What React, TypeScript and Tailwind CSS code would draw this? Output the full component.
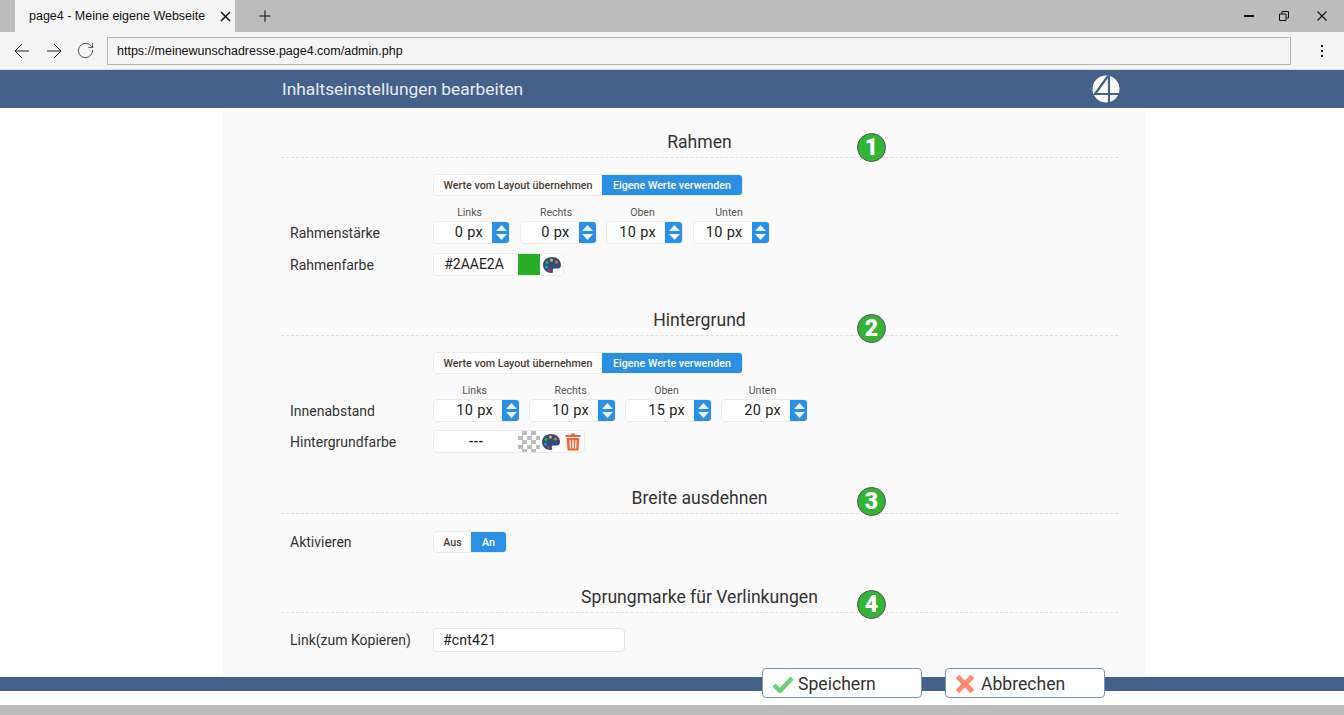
import { RotateCw, Plus } from 'lucide-react';

const rahmen = [
  { label: 'Links', value: '0' },
  { label: 'Rechts', value: '0' },
  { label: 'Oben', value: '10' },
  { label: 'Unten', value: '10' },
];

const abstand = [
  { label: 'Links', value: '10' },
  { label: 'Rechts', value: '10' },
  { label: 'Oben', value: '15' },
  { label: 'Unten', value: '20' },
];

function Logo() {
  return (
    <svg width="28" height="28" viewBox="0 0 28 28">
      <circle cx="14" cy="14" r="13.5" fill="#ffffff" />
      <path d="M16 1 L3 19 L28 19 M17 1 L17 28" fill="none" stroke="#44618a" strokeWidth="2.2" />
    </svg>
  );
}

function Palette() {
  return (
    <svg width="20" height="18" viewBox="0 0 20 18">
      <path d="M10 1 C4.5 1 1 4.6 1 9 C1 13.5 4.8 17 9.5 17 C11 17 11.5 16 11 15 C10.3 13.6 11 12.4 12.6 12.4 L16 12.4 C18 12.4 19 11 19 9 C19 4.5 15.3 1 10 1 Z" fill="#2f4f7a" />
      <circle cx="5" cy="6.5" r="1.6" fill="#2fae4a" />
      <circle cx="9.5" cy="4" r="1.6" fill="#f0b429" />
      <circle cx="14.5" cy="6" r="1.6" fill="#e8643c" />
      <circle cx="4.5" cy="11" r="1.6" fill="#2b8fe3" />
      <circle cx="7.5" cy="14.5" r="1.4" fill="#d8302f" />
    </svg>
  );
}

function Trash() {
  return (
    <svg width="16" height="18" viewBox="0 0 16 18">
      <path d="M5.5 2 L6.2 0.6 L9.8 0.6 L10.5 2 L15.5 2 L15.5 4 L0.5 4 L0.5 2 Z" fill="#f0603a" />
      <path d="M1.6 5 L14.4 5 L13.4 17.5 L2.6 17.5 Z M4.4 7 L4.8 15.5 L6 15.5 L5.7 7 Z M7.3 7 L7.3 15.5 L8.7 15.5 L8.7 7 Z M10.3 7 L10 15.5 L11.2 15.5 L11.6 7 Z" fill="#f0603a" fillRule="evenodd" />
    </svg>
  );
}

function Spinner({ label, value, width }: { label: string; value: string; width: string }) {
  return (
    <div className={width}>
      <div className="h-[16px] pr-[4px] text-center text-[10.5px] leading-[16px] text-[#555]">{label}</div>
      <div className="flex h-[23px] overflow-hidden rounded-[4px] border border-[#ececec] bg-white">
        <div className="flex-1 pr-[9px] text-right text-[14.5px] leading-[22px] tracking-[0.3px] text-[#222]">{value} px</div>
        <div className="-my-px -mr-px flex w-[18px] flex-col items-center justify-center gap-[3px] bg-[#2b8fe3]">
          <svg width="11" height="6" viewBox="0 0 11 6"><path d="M5.5 0 L11 6 L0 6 Z" fill="#e8f2fc" /></svg>
          <svg width="11" height="6" viewBox="0 0 11 6"><path d="M0 0 L11 0 L5.5 6 Z" fill="#e8f2fc" /></svg>
        </div>
      </div>
    </div>
  );
}

function Toggle({ left, right, leftW, rightW }: { left: string; right: string; leftW: string; rightW: string }) {
  return (
    <div className="flex h-[22px] w-fit overflow-hidden rounded-[4px] border border-[#ececec] bg-white text-[10.7px] font-medium leading-[21px]">
      <div className={`${leftW} text-center text-[#4a3c30]`}>{left}</div>
      <div className={`${rightW} bg-[#2b8fe3] text-center text-white`}>{right}</div>
    </div>
  );
}

function SectionTitle({ title, num, badgeTop }: { title: string; num: string; badgeTop: string }) {
  return (
    <div className="relative h-[33px] border-b border-dashed border-[#dddddd] text-center text-[17.6px] leading-[34px] text-[#333]">
      {title}
      <div className={`absolute left-[576px] ${badgeTop} flex h-[29px] w-[29px] items-center justify-center rounded-full border border-[#555] bg-[#35b336] text-[23px] font-black leading-none text-white`}>
        {num}
      </div>
    </div>
  );
}

function Label({ children }: { children: string }) {
  return <div className="w-[152px] shrink-0 pl-[9px] pt-[2px] text-[14px] text-[#333]">{children}</div>;
}

export default function App() {
  return (
    <div className="flex h-[715px] w-[1344px] flex-col overflow-hidden bg-white font-['Roboto',sans-serif]">
      {/* Browser chrome */}
      <div className="flex h-[32px] items-stretch bg-[#bcbcbc] font-['Liberation_Sans',sans-serif]">
        <div className="ml-[15px] flex w-[220px] items-center justify-between bg-[#f5f5f5] pl-[14px] pr-[2px] text-[12.5px] text-[#111]">
          <span>page4 - Meine eigene Webseite</span>
          <svg width="11" height="11" viewBox="0 0 11 11" className="mr-[2px]">
            <path d="M1 1 L10 10 M10 1 L1 10" stroke="#111" strokeWidth="1.5" />
          </svg>
        </div>
        <div className="ml-[21px] flex items-center">
          <Plus className="h-[18px] w-[18px]" strokeWidth={1.4} color="#111" />
        </div>
        <div className="ml-auto flex items-center pr-[17px]">
          <svg width="10" height="2" viewBox="0 0 10 2"><rect width="10" height="2" fill="#111" /></svg>
          <svg width="10" height="10" viewBox="0 0 10 10" className="ml-[25px]">
            <path d="M0.5 3 H7 V9.5 H0.5 Z M3 3 V0.5 H9.5 V7 H7" fill="none" stroke="#111" />
          </svg>
          <svg width="10" height="10" viewBox="0 0 10 10" className="ml-[28px]">
            <path d="M0.5 0.5 L9.5 9.5 M9.5 0.5 L0.5 9.5" stroke="#111" strokeWidth="1.1" />
          </svg>
        </div>
      </div>
      <div className="flex h-[38px] items-center border-b border-[#dcdcdc] bg-[#f5f5f5] font-['Liberation_Sans',sans-serif]">
        <svg width="16" height="16" viewBox="0 0 16 16" className="ml-[14px]">
          <path d="M15 8 H1 M8 1 L1 8 L8 15" fill="none" stroke="#222" strokeWidth="1" />
        </svg>
        <svg width="16" height="16" viewBox="0 0 16 16" className="ml-[16px]">
          <path d="M1 8 H15 M8 1 L15 8 L8 15" fill="none" stroke="#222" strokeWidth="1" />
        </svg>
        <RotateCw className="ml-[14px] h-[19px] w-[19px]" strokeWidth={1} color="#222" />
        <div className="ml-[12px] h-[28px] w-[1184px] border border-[#b5b5b5] bg-[#f5f5f5] pl-[9px] text-[12.5px] leading-[26px] text-[#111]">
          https://meinewunschadresse.page4.com/admin.php
        </div>
        <div className="ml-[30px] flex flex-col gap-[3px]">
          <span className="h-[2px] w-[2px] bg-[#111]" />
          <span className="h-[2px] w-[2px] bg-[#111]" />
          <span className="h-[2px] w-[2px] bg-[#111]" />
        </div>
      </div>

      {/* Header */}
      <div className="flex h-[38px] shrink-0 items-center justify-between bg-[#44618a] pl-[282px] pr-[224px]">
        <span className="text-[17.35px] text-[#e6ecf4]">Inhaltseinstellungen bearbeiten</span>
        <Logo />
      </div>

      {/* Panel */}
      <div className="ml-[223px] mr-[199px] h-[569px] shrink-0 bg-[#fafafa] pl-[58px] pr-[27px] pt-[17px]">
        <div className="h-[178px]">
          <SectionTitle title="Rahmen" num="1" badgeTop="top-[8px]" />
          <div className="ml-[152px] mt-[16px]">
            <Toggle left="Werte vom Layout übernehmen" right="Eigene Werte verwenden" leftW="w-[168px]" rightW="w-[140px]" />
          </div>
          <div className="mt-[9px] flex items-end">
            <Label>Rahmenstärke</Label>
            <div className="flex gap-[9.5px]">
              {rahmen.map((item) => (
                <Spinner key={item.label} label={item.label} value={item.value} width="w-[77px]" />
              ))}
            </div>
          </div>
          <div className="mt-[9px] flex items-center">
            <Label>Rahmenfarbe</Label>
            <div className="flex h-[23px] overflow-hidden rounded-[4px] border border-[#ececec] bg-white">
              <div className="w-[84px] pr-[4px] text-center text-[14px] leading-[21px] text-[#222]">#2AAE2A</div>
              <div className="w-[22px] bg-[#2aae2a]" />
              <div className="flex w-[23px] items-center justify-center"><Palette /></div>
            </div>
          </div>
        </div>

        <div className="h-[178px]">
          <SectionTitle title="Hintergrund" num="2" badgeTop="top-[11px]" />
          <div className="ml-[152px] mt-[16px]">
            <Toggle left="Werte vom Layout übernehmen" right="Eigene Werte verwenden" leftW="w-[168px]" rightW="w-[140px]" />
          </div>
          <div className="mt-[9px] flex items-end">
            <Label>Innenabstand</Label>
            <div className="flex gap-[9px]">
              {abstand.map((item) => (
                <Spinner key={item.label} label={item.label} value={item.value} width="w-[87px]" />
              ))}
            </div>
          </div>
          <div className="mt-[8px] flex items-center">
            <Label>Hintergrundfarbe</Label>
            <div className="flex h-[23px] overflow-hidden rounded-[4px] border border-[#ececec] bg-white">
              <div className="w-[84px] text-center text-[14px] font-medium leading-[21px] text-[#222]">---</div>
              <div className="w-[22px] bg-[repeating-conic-gradient(#bdbdbd_0_25%,#ffffff_0_50%)] bg-[length:9px_9px]" />
              <div className="flex w-[22px] items-center justify-center"><Palette /></div>
              <div className="flex w-[22px] items-center justify-center"><Trash /></div>
            </div>
          </div>
        </div>

        <div className="h-[99px]">
          <SectionTitle title="Breite ausdehnen" num="3" badgeTop="top-[6px]" />
          <div className="mt-[16px] flex items-center">
            <Label>Aktivieren</Label>
            <Toggle left="Aus" right="An" leftW="w-[37px]" rightW="w-[35px]" />
          </div>
        </div>

        <div>
          <SectionTitle title="Sprungmarke für Verlinkungen" num="4" badgeTop="top-[10px]" />
          <div className="mt-[15px] flex items-center">
            <div className="-mt-[2px]">
              <Label>Link(zum Kopieren)</Label>
            </div>
            <div className="h-[24px] w-[192px] rounded-[4px] border border-[#e4e4e4] bg-white pl-[9px] text-[14px] leading-[22px] tracking-[0.2px] text-[#222]">#cnt421</div>
          </div>
        </div>
      </div>

      {/* Footer */}
      <div className="relative h-[14px] shrink-0 bg-[#44618a]">
        <div className="absolute left-[762px] top-[-9px] flex h-[30px] w-[160px] items-center rounded-[4px] border border-[#7f95b5] bg-white pl-[9px] pt-[2px] text-[17.6px] text-[#333]">
          <svg width="22" height="18" viewBox="0 0 22 18" className="mr-[4px] shrink-0">
            <path d="M2 10 L8 16 L20 3" fill="none" stroke="#6ccf7a" strokeWidth="4.5" />
          </svg>
          Speichern
        </div>
        <div className="absolute left-[945px] top-[-9px] flex h-[30px] w-[160px] items-center rounded-[4px] border border-[#7f95b5] bg-white pl-[9px] pt-[2px] text-[17.6px] text-[#333]">
          <svg width="20" height="18" viewBox="0 0 20 18" className="mr-[6px] shrink-0">
            <path d="M2.5 1.5 L17.5 16.5 M17.5 1.5 L2.5 16.5" fill="none" stroke="#ff8a70" strokeWidth="5" />
          </svg>
          Abbrechen
        </div>
      </div>
      <div className="h-[14px] shrink-0 bg-white" />
      <div className="flex-1 bg-[#bcbcbc]" />
    </div>
  );
}
